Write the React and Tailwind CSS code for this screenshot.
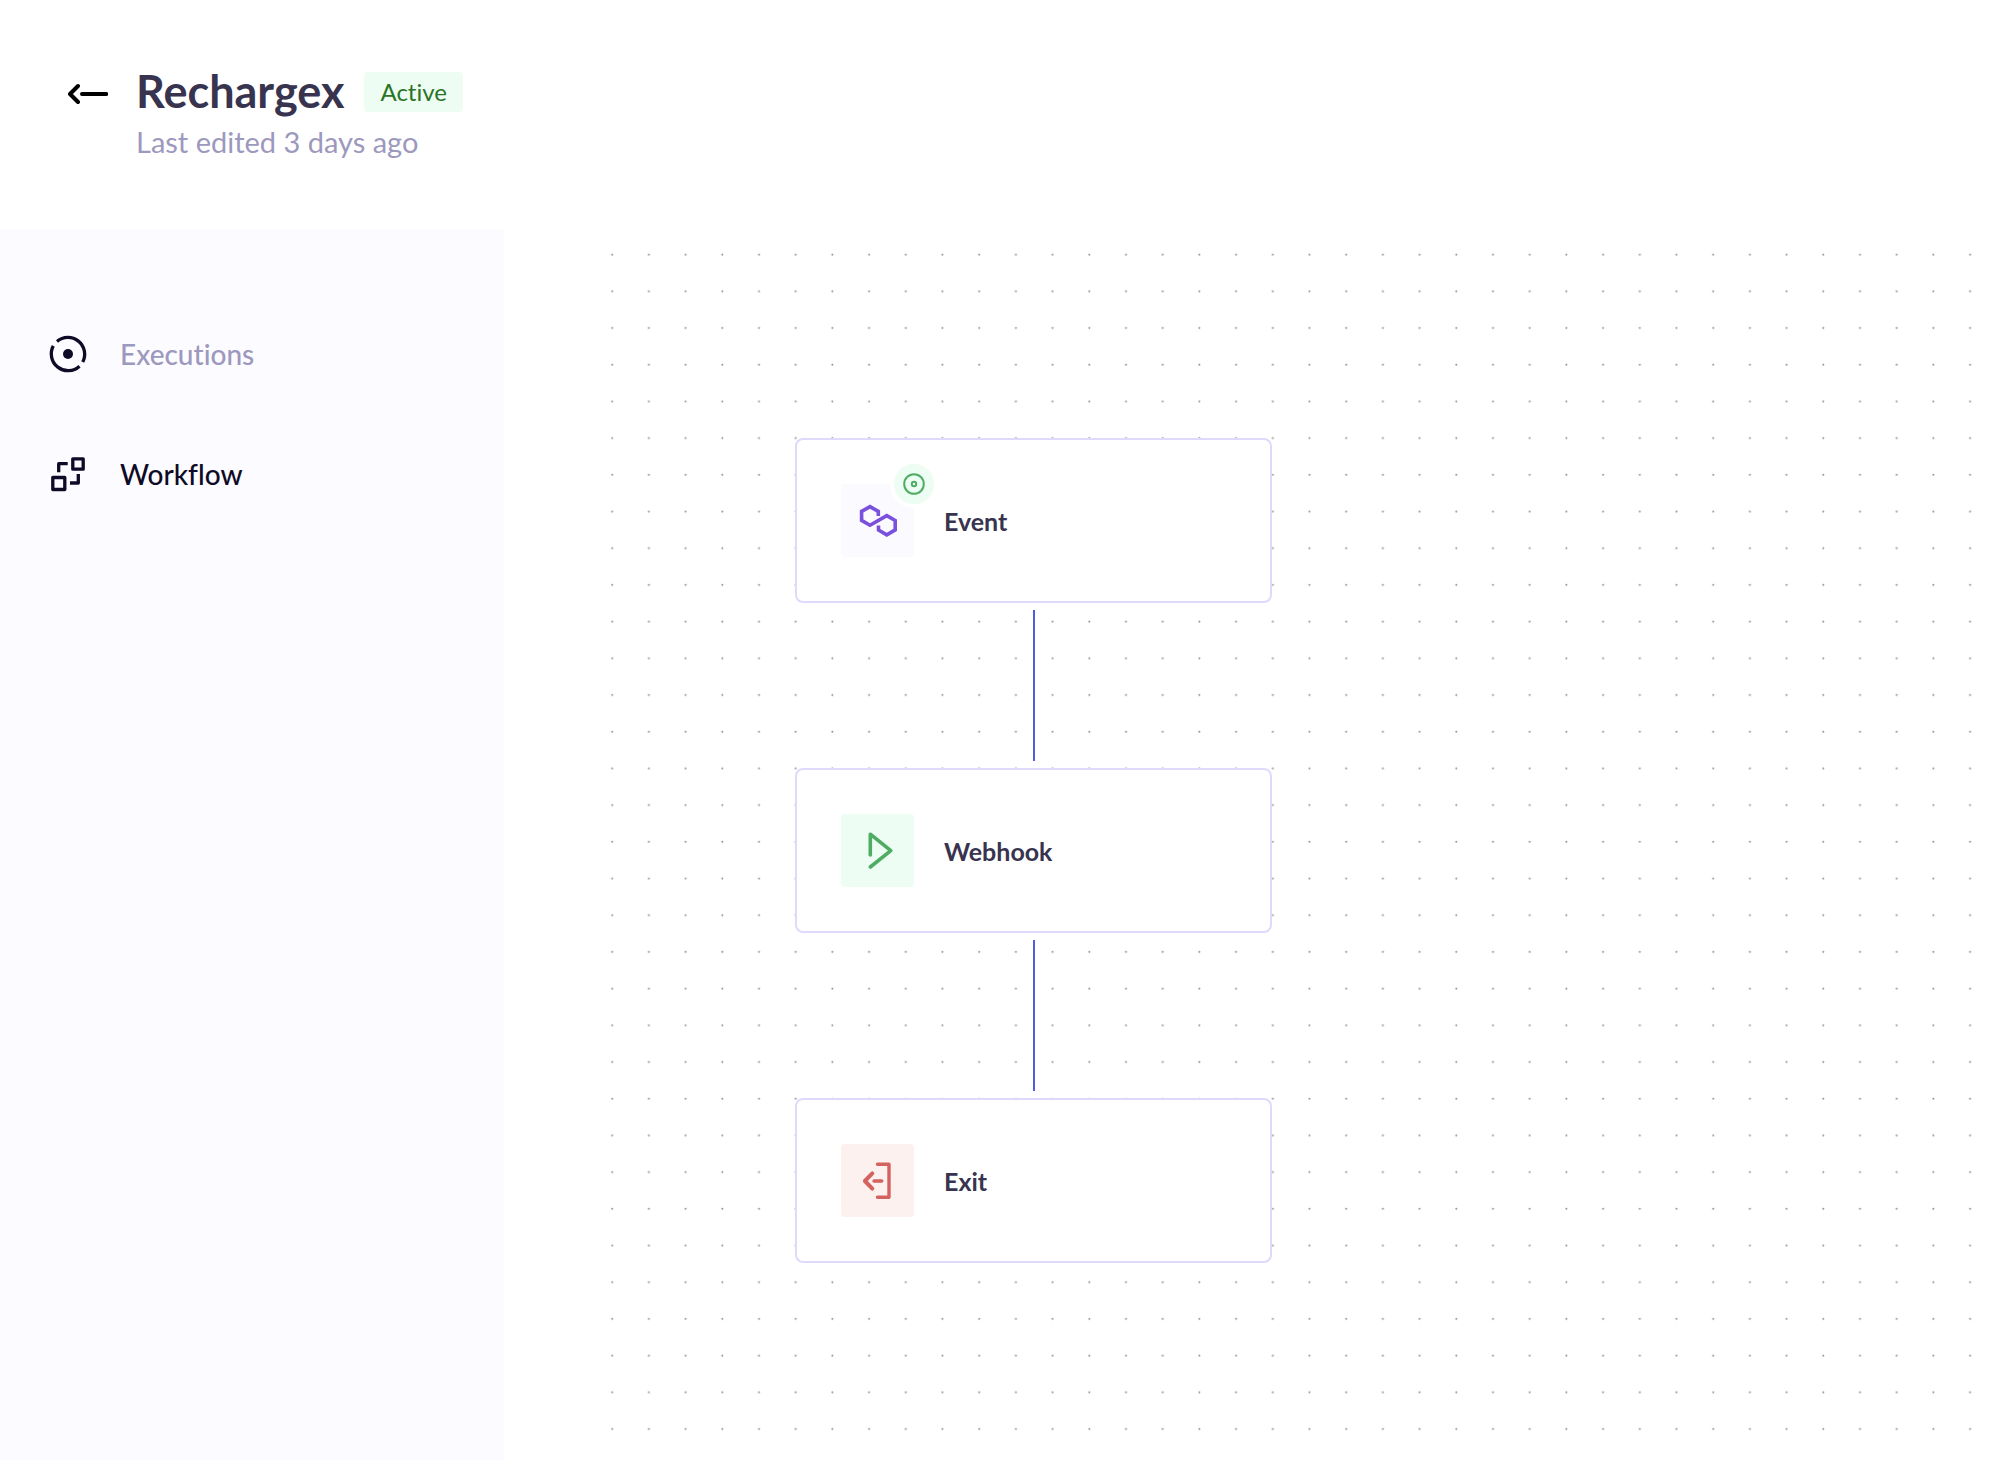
function ArrowLeftIcon() {
  return (
    <svg width="40" height="24" viewBox="0 0 40 24" fill="none" stroke="currentColor" strokeWidth="4" strokeLinecap="round" strokeLinejoin="round" aria-hidden="true">
      <path d="M10 4 2 12l8 8" />
      <path d="M14 12h24.3" />
    </svg>
  );
}

function ExecutionsIcon() {
  return (
    <svg width="40" height="40" viewBox="-20 -20 40 40" fill="none" stroke="currentColor" strokeWidth="3.3" aria-hidden="true">
      <path d="M-11-12.6A16.8 16.8 0 0 1 14.7 8.1" />
      <path d="M11.5 12.2A16.8 16.8 0 0 1-14.7-8.1" />
      <circle r="5" fill="currentColor" stroke="none" />
    </svg>
  );
}

function WorkflowIcon() {
  return (
    <svg width="40" height="40" viewBox="0 0 40 40" fill="none" stroke="currentColor" strokeWidth="3.3" strokeLinejoin="round" aria-hidden="true">
      <rect x="24.8" y="4.8" width="10.4" height="10.4" />
      <rect x="4.8" y="23.5" width="12" height="12" />
      <path d="M19.7 9.7h-9v8.5" />
      <path d="M30.3 20v9H22" />
    </svg>
  );
}

function PolygonIcon() {
  return (
    <svg className="h-full w-full" viewBox="0 0 73 73" fill="none" stroke="#7a51dc" strokeWidth="3.6" aria-hidden="true">
      <path d="M37.3 32v-4.6L29 22.6l-8.4 4.8v9L29 41.2l16.8-9.6 8.4 4.9v9.4L45.8 50.8l-8.3-4.8v-4.4" />
    </svg>
  );
}

function PlayIcon() {
  return (
    <svg className="h-full w-full" viewBox="0 0 73 73" fill="none" stroke="#4fad63" strokeWidth="3.6" strokeLinecap="round" strokeLinejoin="round" aria-hidden="true">
      <path d="M29.3 41V20.2L49.8 36.7 29.3 53" />
    </svg>
  );
}

function ExitIcon() {
  return (
    <svg className="h-full w-full" viewBox="0 0 73 73" fill="none" stroke="#d4625f" strokeWidth="3.4" strokeLinecap="round" strokeLinejoin="round" aria-hidden="true">
      <path d="M36.5 20.3H48v33H36.5" />
      <path d="M31.3 29.4 23.9 37l7.4 7.6" strokeWidth="4" />
      <path d="M33 37h7.8" />
    </svg>
  );
}

function TriggerBadge() {
  return (
    <span className="absolute -top-6 -right-6 flex size-12 items-center justify-center rounded-full border-4 border-white bg-[#edfdf3]">
      <svg width="22" height="22" viewBox="0 0 22 22" fill="none" stroke="#4fad63" strokeWidth="2" aria-hidden="true">
        <circle cx="11" cy="11" r="9.8" />
        <circle cx="11" cy="11" r="2.2" />
      </svg>
    </span>
  );
}

function DotGrid() {
  return (
    <svg className="absolute inset-0 h-full w-full" aria-hidden="true">
      <defs>
        <pattern id="dots" x="0" y="6" width="36.7" height="36.7" patternUnits="userSpaceOnUse">
          <circle cx="18.2" cy="18.5" r="1" fill="#91919a" />
        </pattern>
      </defs>
      <rect width="100%" height="100%" fill="url(#dots)" />
    </svg>
  );
}

function Node({ label, tile, icon, badge }) {
  return (
    <div className="flex h-[165px] w-[477px] items-center gap-[30px] rounded-lg border-2 border-[#dedafb] bg-white pl-11">
      <div className={`relative size-[73px] rounded ${tile}`}>
        {icon}
        {badge}
      </div>
      <span className="text-[25px] leading-8 font-bold text-[#38344f]">{label}</span>
    </div>
  );
}

function Connector() {
  return <div className="my-[7px] h-[151px] w-[2px] bg-[#4f5be3]" />;
}

export default function App() {
  return (
    <div className="flex min-h-screen flex-col bg-white font-['Lato',sans-serif] [font-variant-ligatures:none]">
      <header className="flex items-start gap-[28px] px-[68px] pt-[63px] pb-[66px]">
        <button type="button" aria-label="Back" className="mt-[19px] text-black">
          <ArrowLeftIcon />
        </button>
        <div>
          <div className="flex items-center gap-5">
            <h1 className="text-[45px] leading-[57px] font-bold text-[#38344f]">Rechargex</h1>
            <span className="rounded bg-[#edfdf3] px-4 text-2xl leading-10 text-[#2b7326]">Active</span>
          </div>
          <p className="text-[29px] leading-[44px] text-[#9d98bd]">Last edited 3 days ago</p>
        </div>
      </header>
      <div className="flex grow">
        <nav className="flex w-[504px] shrink-0 flex-col gap-20 bg-[#fcfbff] px-12 pt-[104px]">
          <a href="#executions" className="flex items-center gap-8 text-[28px] leading-10 font-medium text-[#9d98bd]">
            <span className="text-[#0e0b26]"><ExecutionsIcon /></span>
            Executions
          </a>
          <a href="#workflow" aria-current="page" className="flex items-center gap-8 text-[28px] leading-10 font-medium text-[#0e0b26]">
            <WorkflowIcon />
            Workflow
          </a>
        </nav>
        <main className="relative ml-[90px] grow overflow-hidden">
          <DotGrid />
          <div className="relative ml-[201px] flex w-[477px] flex-col items-center pt-[208px]">
            <Node label="Event" tile="bg-[#fbfaff]" icon={<PolygonIcon />} badge={<TriggerBadge />} />
            <Connector />
            <Node label="Webhook" tile="bg-[#edfdf3]" icon={<PlayIcon />} />
            <Connector />
            <Node label="Exit" tile="bg-[#fdf1ef]" icon={<ExitIcon />} />
          </div>
        </main>
      </div>
    </div>
  );
}
